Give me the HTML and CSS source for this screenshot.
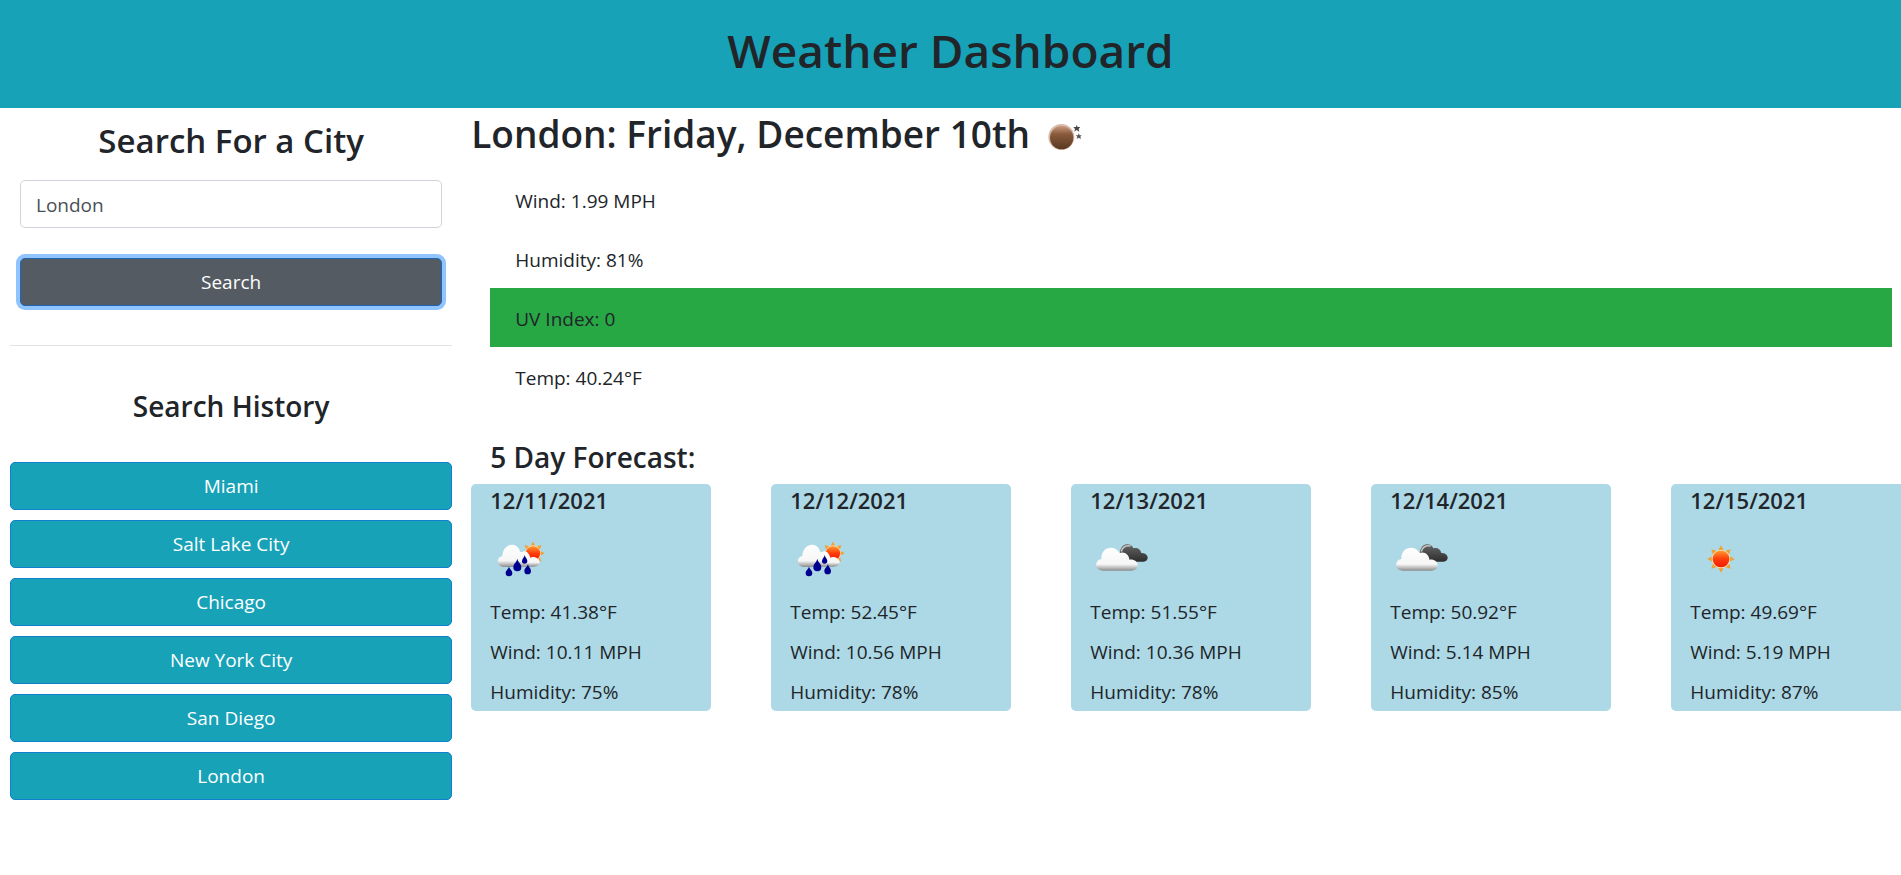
FILE: index.html
```html
<!DOCTYPE html>
<html lang="en">
<head>
<meta charset="utf-8">
<meta name="viewport" content="width=device-width, initial-scale=1">
<title>Weather Dashboard</title>
<link rel="stylesheet" href="styles.css">
</head>
<body>
<svg class="defs" width="0" height="0" aria-hidden="true">
  <defs>
    <linearGradient id="cloudFill" x1="0" y1="0" x2="0" y2="1">
      <stop offset="0" stop-color="#fff"/><stop offset=".72" stop-color="#f6f6f6"/><stop offset="1" stop-color="#8d8d8d"/>
    </linearGradient>
    <linearGradient id="darkFill" x1="0" y1="0" x2="0" y2="1">
      <stop offset="0" stop-color="#666"/><stop offset="1" stop-color="#2d2d2d"/>
    </linearGradient>
    <linearGradient id="sunFill" x1="0" y1="0" x2="0" y2="1">
      <stop offset="0" stop-color="#ff9a2e"/><stop offset=".5" stop-color="#ff3d0c"/><stop offset="1" stop-color="#f01800"/>
    </linearGradient>
    <linearGradient id="moonFill" x1="0" y1="0" x2="0" y2="1">
      <stop offset="0" stop-color="#c99a80"/><stop offset=".35" stop-color="#8a5a3c"/><stop offset="1" stop-color="#573820"/>
    </linearGradient>
    <symbol id="sun" viewBox="-42 -42 84 84">
      <g fill="#f0a032">
        <path d="M-8-26L0-41L8-26z"/>
        <path d="M-8-26L0-41L8-26z" transform="rotate(45)"/><path d="M-8-26L0-41L8-26z" transform="rotate(90)"/>
        <path d="M-8-26L0-41L8-26z" transform="rotate(135)"/><path d="M-8-26L0-41L8-26z" transform="rotate(180)"/>
        <path d="M-8-26L0-41L8-26z" transform="rotate(225)"/><path d="M-8-26L0-41L8-26z" transform="rotate(270)"/>
        <path d="M-8-26L0-41L8-26z" transform="rotate(315)"/>
      </g>
      <circle r="28" fill="#fbd9a8"/><circle r="25" fill="url(#sunFill)"/>
    </symbol>
    <symbol id="rain" viewBox="0 0 62 62">
      <g transform="translate(-5 3) scale(.3333)">
        <use href="#sun" x="108" y="31" width="72" height="72"/>
        <path d="M112 107C98 106 98 88 108 82C104 56 128 52 136 80C148 74 166 84 164 95C162 105 152 107 142 107z" fill="url(#cloudFill)"/>
        <path d="M56 108C34 106 33 78 52 75C54 36 98 30 105 62C122 62 128 82 122 98C118 107 108 108 98 108z" fill="url(#cloudFill)"/>
        <g fill="#000090">
          <path d="M97 83C99 95 109 97 109 109A12 12 0 0 1 85 109C85 97 95 95 97 83z"/>
          <path d="M72 106C73 115 82 118 82 126A10 10 0 0 1 62 126C62 118 71 115 72 106z"/>
          <path d="M129 98C130 108 138 111 138 120A10 10 0 0 1 118 120C118 111 127 108 129 98z"/>
          <path d="M119 72C120 80 127 83 127 90A8 8 0 0 1 111 90C111 83 118 80 119 72z"/>
        </g>
      </g>
    </symbol>
    <symbol id="clouds" viewBox="0 0 62 62">
      <g transform="translate(-10 3) scale(.3333)">
        <path d="M130 92C112 72 120 40 142 40C152 40 158 45 160 52C172 48 182 55 184 66C208 66 209 91 190 92z" fill="url(#darkFill)"/>
        <path d="M124 62C126 48 138 42 152 45" fill="none" stroke="#c4c4c4" stroke-width="5"/>
        <path d="M68 119C43 118 42 88 64 84C62 46 106 40 118 66C134 60 148 72 148 86C176 82 184 116 156 119z" fill="url(#cloudFill)"/>
      </g>
    </symbol>
    <symbol id="clear-day" viewBox="0 0 62 62">
      <use href="#sun" x="17" y="17" width="28" height="28"/>
    </symbol>
    <symbol id="clear-night" viewBox="0 0 62 62">
      <g transform="translate(-1 4) scale(.3333)">
        <circle cx="97" cy="81" r="39" fill="#d9b9a8"/>
        <circle cx="98" cy="83" r="35" fill="url(#moonFill)"/>
        <path d="M143 45L146 51L154 51L149 57L151 65L143 60L136 65L138 57L133 51L141 51z" fill="#4d4542"/>
        <path d="M149 70L152 76L158 76L154 80L156 87L149 83L143 87L145 80L140 76L147 76z" fill="#5d5552"/>
      </g>
    </symbol>
  </defs>
</svg>

<header class="page-header"><h1 class="page-title">Weather Dashboard</h1></header>

<div class="layout">
  <aside class="sidebar">
    <form class="search-form" onsubmit="return false">
      <h3 class="search-title"><label for="city">Search For a City</label></h3>
      <input class="search-input" id="city" type="text" value="London">
      <button class="btn btn-search" type="submit">Search</button>
    </form>
    <hr class="divider">
    <h4 class="history-title">Search History</h4>
    <div class="history">
      <button class="btn" type="button">Miami</button>
      <button class="btn" type="button">Salt Lake City</button>
      <button class="btn" type="button">Chicago</button>
      <button class="btn" type="button">New York City</button>
      <button class="btn" type="button">San Diego</button>
      <button class="btn" type="button">London</button>
    </div>
  </aside>

  <main class="content">
    <h2 class="city-title">London: Friday, December 10th <svg class="icon" role="img" aria-label="Clear night"><use href="#clear-night"/></svg></h2>
    <ul class="conditions">
      <li class="condition">Wind: 1.99 MPH</li>
      <li class="condition">Humidity: 81%</li>
      <li class="condition uv-low">UV Index: 0</li>
      <li class="condition">Temp: 40.24°F</li>
    </ul>
    <h4 class="forecast-title">5 Day Forecast:</h4>
    <div class="forecast">
      <article class="card">
        <h5 class="card-date">12/11/2021</h5>
        <svg class="icon" role="img" aria-label="Rain"><use href="#rain"/></svg>
        <p class="card-text">Temp: 41.38°F</p><p class="card-text">Wind: 10.11 MPH</p><p class="card-text">Humidity: 75%</p>
      </article>
      <article class="card">
        <h5 class="card-date">12/12/2021</h5>
        <svg class="icon" role="img" aria-label="Rain"><use href="#rain"/></svg>
        <p class="card-text">Temp: 52.45°F</p><p class="card-text">Wind: 10.56 MPH</p><p class="card-text">Humidity: 78%</p>
      </article>
      <article class="card">
        <h5 class="card-date">12/13/2021</h5>
        <svg class="icon" role="img" aria-label="Clouds"><use href="#clouds"/></svg>
        <p class="card-text">Temp: 51.55°F</p><p class="card-text">Wind: 10.36 MPH</p><p class="card-text">Humidity: 78%</p>
      </article>
      <article class="card">
        <h5 class="card-date">12/14/2021</h5>
        <svg class="icon" role="img" aria-label="Clouds"><use href="#clouds"/></svg>
        <p class="card-text">Temp: 50.92°F</p><p class="card-text">Wind: 5.14 MPH</p><p class="card-text">Humidity: 85%</p>
      </article>
      <article class="card">
        <h5 class="card-date">12/15/2021</h5>
        <svg class="icon" role="img" aria-label="Clear day"><use href="#clear-day"/></svg>
        <p class="card-text">Temp: 49.69°F</p><p class="card-text">Wind: 5.19 MPH</p><p class="card-text">Humidity: 87%</p>
      </article>
    </div>
  </main>
</div>
</body>
</html>
```
FILE: styles.css
```css
* { box-sizing: border-box; }

body {
  margin: 0;
  background: #fff;
  color: #212529;
  font-family: "Segoe UI", "Open Sans", "Noto Sans", sans-serif;
  font-size: 19px;
  line-height: 30px;
  overflow-x: hidden;
}

h1, h2, h3, h4, h5, p, ul { margin: 0; padding: 0; }
h1, h2, h3, h4, h5 { font-weight: 600; }

.defs { position: absolute; }

.page-header {
  padding: 20px;
  background: #17a2b8;
  text-align: center;
}

.page-title {
  padding-bottom: 8px;
  font-size: 46px;
  line-height: 60px;
}

.layout {
  display: grid;
  grid-template-columns: 25% 75%;
}

.sidebar {
  padding: 10px 23px 0 10px;
  text-align: center;
}

.search-form {
  display: flex;
  flex-direction: column;
  padding: 0 10px;
}

.search-title {
  margin-bottom: 17px;
  font-size: 33px;
  line-height: 45px;
}

.search-input {
  height: 48px;
  margin-bottom: 30px;
  padding: 2px 15px 0;
  border: 1px solid #ced4da;
  border-radius: 5px;
  background: #fff;
  color: #495057;
  font: inherit;
}

.btn {
  height: 48px;
  padding: 0 15px;
  border: 1px solid #107fd0;
  border-radius: 5px;
  background: #17a2b8;
  color: #fff;
  font: inherit;
  cursor: pointer;
}

.btn-search {
  border-color: #1d66b4;
  background: #545b62;
  box-shadow: 0 0 0 4px #8fc4ff;
}

.divider {
  margin: 39px 0 40px;
  border: 0;
  border-top: 1px solid #e2e2e2;
}

.history-title {
  margin-bottom: 36px;
  font-size: 28px;
  line-height: 40px;
}

.history {
  display: flex;
  flex-direction: column;
  gap: 10px;
}

.content {
  min-width: 0;
  padding-left: 15px;
  margin-left: -19px;
}

.icon {
  display: block;
  width: 62px;
  height: 62px;
}

.city-title {
  display: flex;
  align-items: flex-start;
  height: 56px;
  font-size: 37px;
  line-height: 52px;
}

.city-title .icon { margin-top: -2px; }

.conditions {
  margin: 6px 9px 0 19px;
  list-style: none;
}

.condition {
  padding: 16px 25px 13px;
}

.uv-low { background: #28a745; }

.forecast-title {
  margin: 31px 0 7px 19px;
  font-size: 28px;
  line-height: 40px;
}

.forecast {
  display: flex;
  gap: 60px;
}

.card {
  flex: 0 0 240px;
  padding: 0 19px 4px;
  border-radius: 5px;
  background: #add8e6;
}

.card-date {
  margin-bottom: 12px;
  font-size: 22px;
  line-height: 32px;
}

.card-text {
  margin-bottom: 10px;
}

.card .icon { margin-bottom: 7px; }

.card-text:last-child { margin-bottom: 0; }
```
